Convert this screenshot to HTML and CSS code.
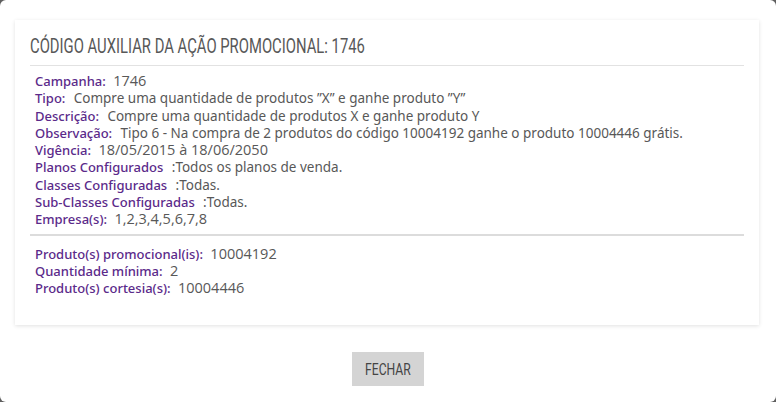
FILE: index.html
```html
<!DOCTYPE html>
<html lang="pt">
<head>
<meta charset="utf-8">
<link rel="stylesheet" href="styles.css">
</head>
<body>
<div class="modal">
  <div class="card">
    <h1 class="title"><span class="narrow">CÓDIGO AUXILIAR DA AÇÃO PROMOCIONAL: 1746</span></h1>
    <div class="section">
      <div class="row"><span class="lbl">Campanha:</span> <span class="val num">1746</span></div>
      <div class="row"><span class="lbl">Tipo:</span> <span class="val">Compre uma quantidade de produtos ”X” e ganhe produto ”Y”</span></div>
      <div class="row"><span class="lbl">Descrição:</span> <span class="val">Compre uma quantidade de produtos X e ganhe produto Y</span></div>
      <div class="row"><span class="lbl">Observação:</span> <span class="val">Tipo 6 - Na compra de 2 produtos do código 10004192 ganhe o produto 10004446 grátis.</span></div>
      <div class="row"><span class="lbl">Vigência:</span> <span class="val num">18/05/2015 à 18/06/2050</span></div>
      <div class="row"><span class="lbl">Planos Configurados</span> <span class="val">:Todos os planos de venda.</span></div>
      <div class="row"><span class="lbl">Classes Configuradas</span> <span class="val">:Todas.</span></div>
      <div class="row"><span class="lbl">Sub-Classes Configuradas</span> <span class="val">:Todas.</span></div>
      <div class="row"><span class="lbl">Empresa(s):</span> <span class="val num">1,2,3,4,5,6,7,8</span></div>
    </div>
    <div class="section sep">
      <div class="row"><span class="lbl">Produto(s) promocional(is):</span> <span class="val num">10004192</span></div>
      <div class="row"><span class="lbl">Quantidade mínima:</span> <span class="val num">2</span></div>
      <div class="row"><span class="lbl">Produto(s) cortesia(s):</span> <span class="val num">10004446</span></div>
    </div>
  </div>
  <div class="actions">
    <button class="btn"><span class="narrow">FECHAR</span></button>
  </div>
</div>
</body>
</html>
```
FILE: styles.css
```css
html, body {
  margin: 0;
  padding: 0;
  background: #5f5f5f;
}
.modal {
  width: 776px;
  height: 402px;
  box-sizing: border-box;
  background: #fff;
  border-radius: 6px;
  padding: 20px 17px 0 15px;
  overflow: hidden;
}
.card {
  height: 305px;
  box-sizing: border-box;
  background: #fff;
  box-shadow: 0 1px 4px rgba(0,0,0,0.12);
  padding: 14px 15px 0 15px;
}
.title {
  margin: 0;
  font-family: Roboto, sans-serif;
  font-weight: normal;
  font-size: 19.5px;
  color: #585858;
  line-height: 22px;
  padding: 2px 0 7px 0;
  border-bottom: 1px solid #e2e2e2;
  white-space: nowrap;
}
.narrow {
  display: inline-block;
  transform: scaleX(0.76);
  transform-origin: left center;
}
.section {
  padding: 7px 0 5px 5px;
  font-family: "Noto Sans", sans-serif;
  font-size: 13px;
  line-height: 17.3px;
}
.sep {
  border-top: 2px solid #dcdcdc;
  padding-top: 10px;
}
.row {
  white-space: nowrap;
  height: 17.3px;
}
.lbl {
  color: #5b2a8a;
  font-weight: 500;
}
.val {
  color: #585858;
  margin-left: 5px;
  font-size: 13.5px;
  line-height: 1;
}
.val.num {
  font-family: "Open Sans", sans-serif;
  font-size: 14.5px;
  margin-left: 4px;
}
.actions {
  display: flex;
  justify-content: center;
  padding-top: 27px;
  padding-left: 2px;
}
.btn {
  width: 72px;
  height: 34px;
  border: none;
  background: #d4d4d4;
  color: #444;
  font-family: Roboto, sans-serif;
  font-size: 16px;
  padding: 0 0 0 13px;
  text-align: left;
}
```
